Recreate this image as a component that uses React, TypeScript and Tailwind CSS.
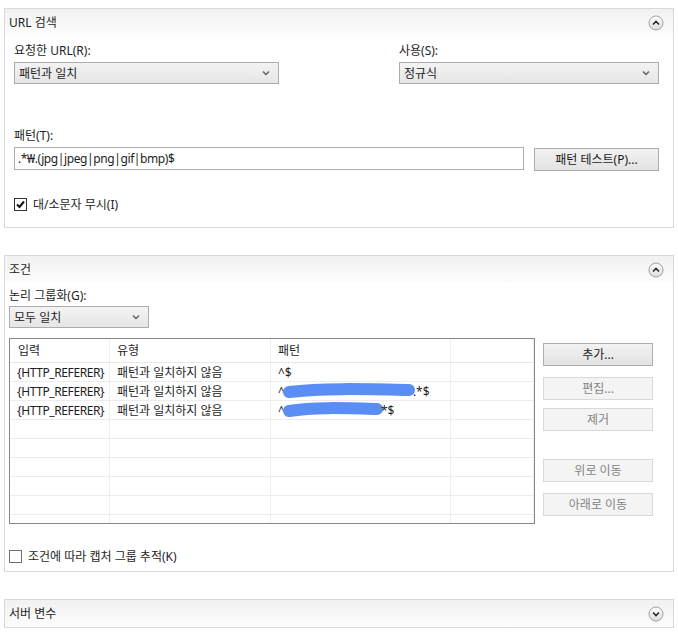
import React from 'react';

const ToggleIcon = ({ open }: { open: boolean }) => (
    <svg width="16" height="16" viewBox="0 0 16 16">
        <defs>
            <linearGradient id={open ? 'tg-o' : 'tg-c'} x1="0" y1="0" x2="0" y2="1">
                <stop offset="0" stopColor="#ffffff" />
                <stop offset="1" stopColor="#dcdcdc" />
            </linearGradient>
        </defs>
        <circle cx="8" cy="8" r="7" fill={`url(#${open ? 'tg-o' : 'tg-c'})`} stroke="#a0a0a0" strokeWidth="1" />
        {open ? (
            <path d="M5 9.5 L8 6.5 L11 9.5" fill="none" stroke="#2a2a2a" strokeWidth="1.7" />
        ) : (
            <path d="M5 6.5 L8 9.5 L11 6.5" fill="none" stroke="#2a2a2a" strokeWidth="1.7" />
        )}
    </svg>
);

const PanelHeader = ({ title, open }: { title: string; open: boolean }) => (
    <div className="flex h-[27px] items-center justify-between bg-gradient-to-b from-[#f1f1f1] to-[#fdfdfd] pl-[4px] pr-[9px]">
        <span>{title}</span>
        <ToggleIcon open={open} />
    </div>
);

const Chevron = () => (
    <svg width="8" height="6" viewBox="0 0 8 6">
        <path d="M1 1.5 L4 4.5 L7 1.5" fill="none" stroke="#606060" strokeWidth="1.4" />
    </svg>
);

const Select = ({ value, className }: { value: string; className: string }) => (
    <div className={`flex h-[22px] items-center justify-between border border-[#acacac] bg-gradient-to-b from-[#f3f3f3] to-[#e6e6e6] pl-[4px] pr-[8px] ${className}`}>
        <span>{value}</span>
        <Chevron />
    </div>
);

const Checkbox = ({ checked }: { checked: boolean }) => (
    <span className={`flex h-[13px] w-[13px] items-center justify-center border bg-white ${checked ? 'border-[#333333]' : 'border-[#707070]'}`}>
        {checked && (
            <svg width="11" height="11" viewBox="0 0 11 11">
                <path d="M2 5.5 L4.5 8 L9 2.5" fill="none" stroke="#111" strokeWidth="2" />
            </svg>
        )}
    </span>
);

const Button = ({ label, disabled, className }: { label: string; disabled?: boolean; className: string }) => (
    <div
        className={`flex h-[23px] w-[110px] items-center justify-center border ${
            disabled
                ? 'border-[#d9d9d9] bg-[#f4f4f4] text-[#838383]'
                : 'border-[#adadad] bg-gradient-to-b from-[#f2f2f2] to-[#e3e3e3] text-[#1a1a1a]'
        } ${className}`}
    >
        {label}
    </div>
);

const Blob = ({ width }: { width: number }) => (
    <svg width={width} height="16" viewBox={`0 0 ${width} 16`} className="-mx-[2px]">
        <path d={`M6 9 C ${width * 0.3} 5, ${width * 0.6} 6, ${width - 6} 7`} fill="none" stroke="#5b8ef5" strokeWidth="12" strokeLinecap="round" />
    </svg>
);

const rows = [
    { input: '{HTTP_REFERER}', type: '패턴과 일치하지 않음', pattern: <span>^$</span> },
    {
        input: '{HTTP_REFERER}',
        type: '패턴과 일치하지 않음',
        pattern: (
            <span className="flex items-center">
                ^<Blob width={132} />.*$
            </span>
        ),
    },
    {
        input: '{HTTP_REFERER}',
        type: '패턴과 일치하지 않음',
        pattern: (
            <span className="flex items-center">
                ^<Blob width={100} />*$
            </span>
        ),
    },
];

const cell = 'border-r border-[#efefef] pl-[7px] flex items-center whitespace-nowrap overflow-visible';

export default function App() {
    return (
        <div className="min-h-[644px] bg-white pt-[8px] font-['Noto_Sans','Noto_Sans_CJK_KR',sans-serif] text-[12px] leading-[15px] text-[#1e1e1e]">
            {/* URL 검색 */}
            <div className="mx-[4px] border border-[#d9d9d9]">
                <PanelHeader title="URL 검색" open />
                <div className="pl-[9px] pr-[14px] pb-[15px]">
                    <div className="mt-[7px] flex">
                        <div className="w-[265px]">
                            <div className="h-[15px]">요청한 URL(R):</div>
                            <Select value="패턴과 일치" className="mt-[4px] w-[265px]" />
                        </div>
                        <div className="ml-[120px] flex-1">
                            <div className="h-[15px]">사용(S):</div>
                            <Select value="정규식" className="mt-[4px] w-full" />
                        </div>
                    </div>
                    <div className="mt-[44px] h-[15px]">패턴(T):</div>
                    <div className="mt-[4px] flex items-start">
                        <div className="flex h-[23px] w-[510px] items-center border border-[#abadb3] bg-white pl-[3px] tracking-[-0.4px]">
                            .*₩.(jpg|jpeg|png|gif|bmp)$
                        </div>
                        <Button label="패턴 테스트(P)..." className="ml-[10px] mt-[1px] w-[125px]" />
                    </div>
                    <div className="mt-[26px] flex items-center gap-[6px]">
                        <Checkbox checked />
                        <span>대/소문자 무시(I)</span>
                    </div>
                </div>
            </div>

            {/* 조건 */}
            <div className="mx-[4px] mt-[27px] border border-[#d9d9d9]">
                <PanelHeader title="조건" open />
                <div className="pl-[4px] pr-[19px] pb-[7px]">
                    <div className="mt-[5px] h-[15px]">논리 그룹화(G):</div>
                    <Select value="모두 일치" className="mt-[3px] w-[140px]" />
                    <div className="mt-[10px] flex items-start">
                        <div className="h-[186px] w-[526px] overflow-hidden border border-[#828790] bg-white">
                            <div className="grid h-[24px] grid-cols-[100px_161px_180px_1fr] border-b border-[#e8e8e8]">
                                <div className={`${cell} pl-[8px]`}>입력</div>
                                <div className={cell}>유형</div>
                                <div className={cell}>패턴</div>
                                <div className={cell}></div>
                            </div>
                            {Array.from({ length: 9 }).map((_, i) => {
                                const r = rows[i];
                                return (
                                    <div key={i} className="grid h-[19px] grid-cols-[100px_161px_180px_1fr] border-b border-[#ececec]">
                                        <div className={`${cell} pl-[6px] tracking-[-0.4px]`}>{r?.input}</div>
                                        <div className={cell}>{r?.type}</div>
                                        <div className={cell}>{r?.pattern}</div>
                                        <div className={cell}></div>
                                    </div>
                                );
                            })}
                        </div>
                        <div className="ml-[8px] flex flex-col">
                            <Button label="추가..." className="mt-[5px]" />
                            <Button label="편집..." disabled className="mt-[11px]" />
                            <Button label="제거" disabled className="mt-[8px]" />
                            <Button label="위로 이동" disabled className="mt-[28px]" />
                            <Button label="아래로 이동" disabled className="mt-[11px]" />
                        </div>
                    </div>
                    <div className="mt-[25px] flex items-center gap-[6px]">
                        <Checkbox checked={false} />
                        <span>조건에 따라 캡처 그룹 추적(K)</span>
                    </div>
                </div>
            </div>

            {/* 서버 변수 */}
            <div className="mx-[4px] mt-[27px] border border-[#d9d9d9]">
                <PanelHeader title="서버 변수" open={false} />
            </div>
        </div>
    );
}
